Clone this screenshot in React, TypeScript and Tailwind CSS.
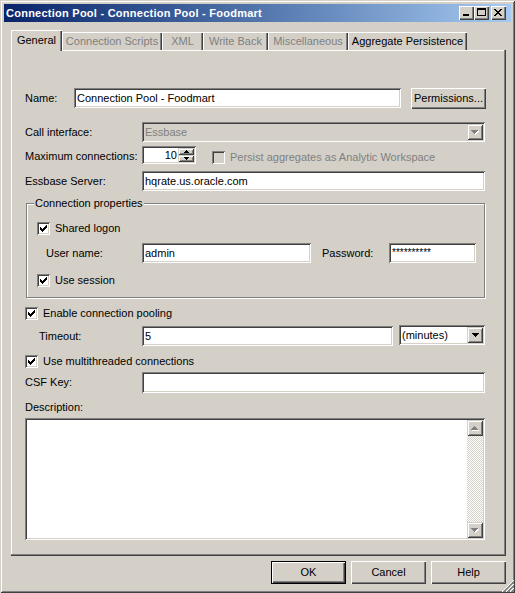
import React from "react";

type Art = string[];

// classic 3D edges
const SUNKEN =
  "shadow-[inset_1px_1px_0_#808080,inset_-1px_-1px_0_#ffffff,inset_2px_2px_0_#404040,inset_-2px_-2px_0_#d4d0c8]";
const RAISED = "shadow-[inset_1px_1px_0_#ffffff,inset_-1px_-1px_0_#404040,inset_-2px_-2px_0_#808080]";
const FRAME =
  "shadow-[inset_1px_1px_0_#d4d0c8,inset_-1px_-1px_0_#404040,inset_2px_2px_0_#ffffff,inset_-2px_-2px_0_#808080]";
const GRAY = "text-[#808080]";

const INK = { x: "#000000" };
const ETCHED = { g: "#808080", w: "#ffffff" };

const DOWN: Art = ["xxxxxxx", ".xxxxx.", "..xxx..", "...x..."];
const UP: Art = [...DOWN].reverse();
const SPIN_UP: Art = ["..x..", ".xxx.", "xxxxx"];
const SPIN_DOWN: Art = [...SPIN_UP].reverse();
const CHECK: Art = ["......x", ".....xx", "x...xxx", "xx.xxx.", "xxxxx..", ".xxx...", "..x...."];
const MIN: Art = ["xxxxxx", "xxxxxx"];
const MAX: Art = [
  "xxxxxxxxx",
  "xxxxxxxxx",
  "x.......x",
  "x.......x",
  "x.......x",
  "x.......x",
  "x.......x",
  "xxxxxxxxx",
];
const CLOSE: Art = ["xx....xx", ".xx..xx.", "..xxxx..", "...xx...", "..xxxx..", ".xx..xx.", "xx....xx"];
const GRIP: Art = Array.from({ length: 12 }, (_, y) =>
  Array.from({ length: 12 }, (_, x) => {
    const s = x + y;
    if (s < 11) return ".";
    const m = (s - 11) % 4;
    return m === 0 ? "w" : m === 3 ? "." : "g";
  }).join("")
);

function Pixels({ art, palette }: { art: Art; palette: Record<string, string> }) {
  const w = art[0].length;
  const h = art.length;
  const cells: React.ReactNode[] = [];
  art.forEach((row, y) =>
    row.split("").forEach((ch, x) => {
      const fill = palette[ch];
      if (fill) cells.push(<rect key={`${x}.${y}`} x={x} y={y} width="1" height="1" fill={fill} />);
    })
  );
  return (
    <svg width={w} height={h} viewBox={`0 0 ${w} ${h}`} shapeRendering="crispEdges" className="block">
      {cells}
    </svg>
  );
}

// grey glyph with a white copy one pixel down-right, the way disabled arrows are drawn
function etch(art: Art): Art {
  const out: string[] = [];
  for (let y = 0; y <= art.length; y++) {
    let row = "";
    for (let x = 0; x <= art[0].length; x++) {
      if (art[y]?.[x] === "x") row += "g";
      else if (art[y - 1]?.[x - 1] === "x") row += "w";
      else row += ".";
    }
    out.push(row);
  }
  return out;
}

function CheckBox({ checked, disabled }: { checked?: boolean; disabled?: boolean }) {
  return (
    <div className={`w-[13px] h-[13px] shrink-0 pl-[3px] pt-[3px] ${SUNKEN} ${disabled ? "bg-[#d4d0c8]" : "bg-white"}`}>
      {checked && <Pixels art={CHECK} palette={INK} />}
    </div>
  );
}

function Check({
  label,
  checked,
  disabled,
  className = "",
}: {
  label: string;
  checked?: boolean;
  disabled?: boolean;
  className?: string;
}) {
  return (
    <div className={`flex items-center h-[13px] ${className}`}>
      <CheckBox checked={checked} disabled={disabled} />
      <span className={`ml-[5px] whitespace-nowrap ${disabled ? GRAY : ""}`}>{label}</span>
    </div>
  );
}

function PushButton({ children, className = "" }: { children: React.ReactNode; className?: string }) {
  return (
    <div className={`flex items-center justify-center bg-[#d4d0c8] whitespace-nowrap ${RAISED} ${className}`}>
      {children}
    </div>
  );
}

function Field({ value, className = "" }: { value?: string; className?: string }) {
  return (
    <div className={`h-[20px] bg-white flex items-center pl-[3px] whitespace-nowrap overflow-hidden ${SUNKEN} ${className}`}>
      {value}
    </div>
  );
}

function Combo({ value, disabled, className = "" }: { value: string; disabled?: boolean; className?: string }) {
  return (
    <div
      className={`h-[20px] p-[2px] flex items-center ${SUNKEN} ${disabled ? "bg-[#d4d0c8]" : "bg-white"} ${className}`}
    >
      <span className={`flex-1 pl-[1px] whitespace-nowrap ${disabled ? GRAY : ""}`}>{value}</span>
      <div className={`w-[16px] h-[16px] bg-[#d4d0c8] flex items-center justify-center ${FRAME}`}>
        {disabled ? <Pixels art={etch(DOWN)} palette={ETCHED} /> : <Pixels art={DOWN} palette={INK} />}
      </div>
    </div>
  );
}

function Spin({ value }: { value: string }) {
  return (
    <div className={`w-[54px] h-[18px] bg-white p-[2px] flex ${SUNKEN}`}>
      <span className="flex-1 text-right pr-[1px] leading-[14px]">{value}</span>
      <div className="w-[16px] flex flex-col">
        <div className={`h-[7px] bg-[#d4d0c8] flex items-center justify-center ${FRAME}`}>
          <Pixels art={SPIN_UP} palette={INK} />
        </div>
        <div className={`h-[7px] bg-[#d4d0c8] flex items-center justify-center ${FRAME}`}>
          <Pixels art={SPIN_DOWN} palette={INK} />
        </div>
      </div>
    </div>
  );
}

function CaptionButton({ art, className = "" }: { art: Art; className?: string }) {
  return (
    <div className={`w-[15px] h-[14px] bg-[#d4d0c8] flex ${RAISED} ${className}`}>
      <Pixels art={art} palette={INK} />
    </div>
  );
}

const TABS = [
  { label: "General", w: "w-[51px]", active: true },
  { label: "Connection Scripts", w: "w-[100px]", disabled: true },
  { label: "XML", w: "w-[41px]", disabled: true },
  { label: "Write Back", w: "w-[65px]", disabled: true },
  { label: "Miscellaneous", w: "w-[80px]", disabled: true },
  { label: "Aggregate Persistence", w: "w-[119px]" },
];

function TabStrip() {
  return (
    <div className="flex items-end h-[21px] w-[495px]">
      {TABS.map((t) =>
        t.active ? (
          <div
            key={t.label}
            className={`${t.w} h-[21px] shrink-0 flex items-center justify-center pb-[1px] shadow-[inset_1px_1px_0_#ffffff,inset_-1px_0_0_#404040,inset_-2px_0_0_#808080]`}
          >
            {t.label}
          </div>
        ) : (
          <div
            key={t.label}
            className={`${t.w} h-[19px] shrink-0 flex items-center justify-center pb-[1px] whitespace-nowrap shadow-[inset_0_-1px_0_#ffffff,inset_1px_1px_0_#ffffff,inset_-1px_0_0_#404040,inset_-2px_0_0_#808080] ${
              t.disabled ? GRAY : ""
            }`}
          >
            {t.label}
          </div>
        )
      )}
      <div className="flex-1 h-[1px] bg-white shadow-[inset_-1px_0_0_#404040,inset_-2px_0_0_#808080]" />
    </div>
  );
}

function GeneralPage() {
  return (
    <div className="w-[495px] h-[505px] pt-[37px] pl-[14px] flex flex-col shadow-[inset_-1px_-1px_0_#404040,inset_-2px_-2px_0_#808080,inset_1px_0_0_#ffffff]">
      <div className="flex h-[34px]">
        <span className="w-[49px] h-[20px] flex items-center">Name:</span>
        <Field value="Connection Pool - Foodmart" className="w-[327px]" />
        <PushButton className="ml-[10px] w-[75px] h-[21px]">Permissions...</PushButton>
      </div>

      <div className="flex h-[24px]">
        <span className="w-[117px] h-[20px] flex items-center">Call interface:</span>
        <Combo value="Essbase" disabled className="w-[343px]" />
      </div>

      <div className="flex h-[25px]">
        <span className="w-[117px] h-[18px] flex items-center mt-[1px]">Maximum connections:</span>
        <Spin value="10" />
        <Check label="Persist aggregates as Analytic Workspace" disabled className="ml-[16px] mt-[5px]" />
      </div>

      <div className="flex h-[32px]">
        <span className="w-[117px] h-[20px] flex items-center">Essbase Server:</span>
        <Field value="hqrate.us.oracle.com" className="w-[343px]" />
      </div>

      <div className="relative ml-[1px] w-[459px] h-[95px] shrink-0 border border-[#808080] pt-[18px] pl-[10px] shadow-[inset_1px_1px_0_#ffffff,1px_1px_0_#ffffff]">
        <span className="absolute left-[7px] top-[-7px] px-[1px] bg-[#d4d0c8] leading-[13px]">
          Connection properties
        </span>
        <Check label="Shared logon" checked />
        <div className="flex mt-[8px] ml-[9px]">
          <span className="w-[96px] h-[20px] flex items-center">User name:</span>
          <Field value="admin" className="w-[169px]" />
          <span className="ml-[11px] w-[67px] h-[20px] flex items-center">Password:</span>
          <Field value="**********" className="w-[87px] !items-start pt-[3px] text-[10px]" />
        </div>
        <Check label="Use session" checked className="mt-[11px]" />
      </div>

      <Check label="Enable connection pooling" checked className="mt-[9px]" />

      <div className="flex h-[30px] mt-[5px]">
        <span className="ml-[14px] w-[103px] h-[20px] mt-[1px] flex items-center">Timeout:</span>
        <Field value="5" className="w-[251px] mt-[1px]" />
        <Combo value="(minutes)" className="ml-[6px] w-[86px]" />
      </div>

      <Check label="Use multithreaded connections" checked />

      <div className="flex h-[28px] mt-[4px]">
        <span className="w-[117px] h-[21px] flex items-center">CSF Key:</span>
        <Field className="w-[343px] !h-[21px]" />
      </div>

      <div className="h-[18px] pt-[1px]">Description:</div>

      <div className={`w-[460px] h-[122px] bg-white p-[2px] flex justify-end ${SUNKEN}`}>
        <div className="w-[16px] flex flex-col">
          <div className={`h-[16px] bg-[#d4d0c8] flex items-center justify-center ${FRAME}`}>
            <Pixels art={etch(UP)} palette={ETCHED} />
          </div>
          <div className="flex-1 bg-[image:repeating-conic-gradient(#d4d0c8_0%_25%,#ffffff_0%_50%)] bg-[length:2px_2px]" />
          <div className={`h-[16px] bg-[#d4d0c8] flex items-center justify-center ${FRAME}`}>
            <Pixels art={etch(DOWN)} palette={ETCHED} />
          </div>
        </div>
      </div>
    </div>
  );
}

export default function App() {
  return (
    <div
      className={`relative w-[515px] h-[593px] p-[4px] bg-[#d4d0c8] flex flex-col text-black text-[11px] leading-[13px] font-['Liberation_Sans',Arial,sans-serif] ${FRAME}`}
    >
      <div className="h-[18px] shrink-0 flex items-center pl-[2px] pr-[5px] bg-linear-to-r from-[#0a246a] to-[#a6caf0]">
        <span className="flex-1 text-white font-bold tracking-[0.25px] whitespace-nowrap">
          Connection Pool - Connection Pool - Foodmart
        </span>
        <CaptionButton art={MIN} className="pl-[4px] pt-[8px]" />
        <CaptionButton art={MAX} className="pl-[3px] pt-[2px]" />
        <CaptionButton art={CLOSE} className="ml-[2px] pl-[3px] pt-[3px]" />
      </div>

      <div className="pl-[7px] pt-[8px] flex flex-col">
        <TabStrip />
        <GeneralPage />
      </div>

      <div className="flex justify-end gap-[5px] mt-[5px] pr-[5px]">
        <div className="w-[75px] h-[23px] border border-black">
          <PushButton className="w-full h-full">OK</PushButton>
        </div>
        <PushButton className="w-[75px] h-[23px]">Cancel</PushButton>
        <PushButton className="w-[75px] h-[23px]">Help</PushButton>
      </div>

      <div className="absolute right-[1px] bottom-[1px]">
        <Pixels art={GRIP} palette={ETCHED} />
      </div>
    </div>
  );
}
